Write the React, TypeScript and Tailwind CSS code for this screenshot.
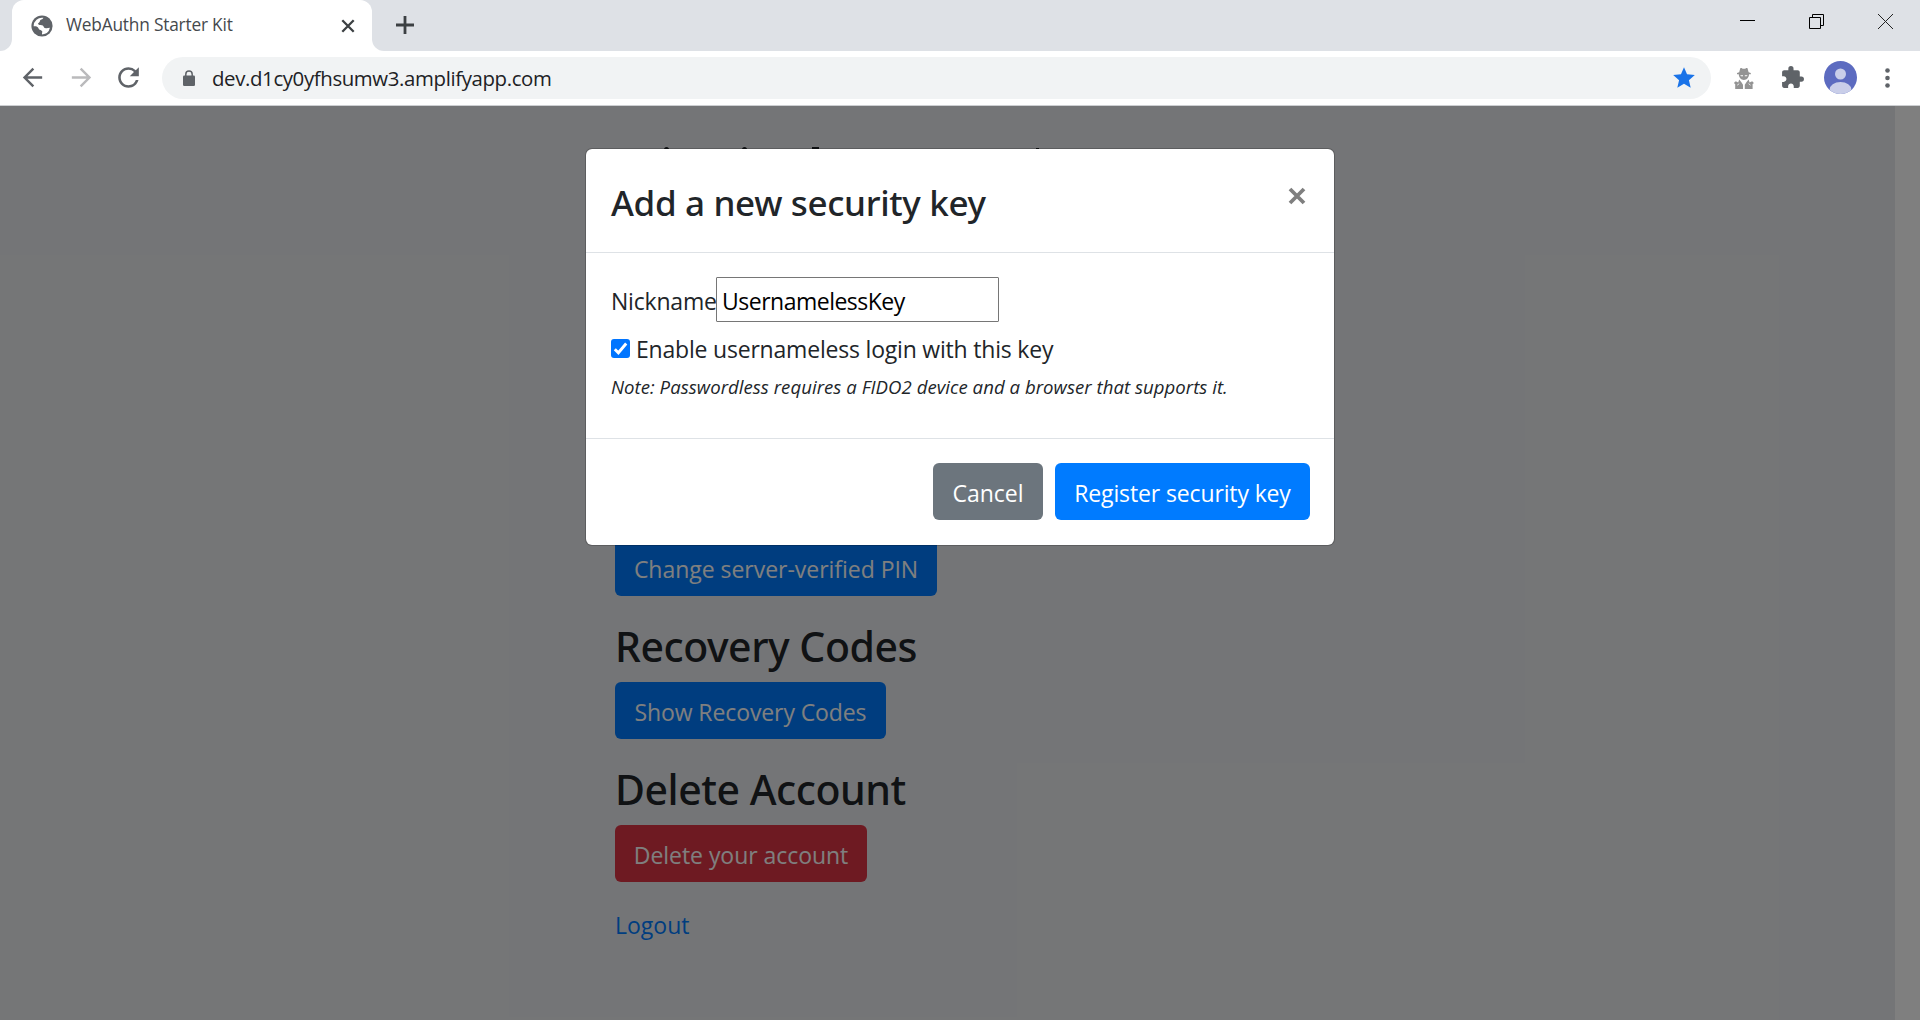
import { useState, type ReactNode } from "react";
import { MdArrowBack, MdArrowForward, MdRefresh, MdStar, MdExtension } from "react-icons/md";

function GlobeIcon() {
  return (
    <svg viewBox="0 0 22 22" className="size-[22px] shrink-0">
      <circle cx="11" cy="11" r="10.6" fill="#5f6368" />
      <path
        d="M12.4 2.800c-.3 1.400-1.900 1.600-2.900 2.300-1 .8-.2 1.700-1.400 2.400-.9.5-1.400 1.100-.6 1.900 1.100.8 3.100.3 4.300 1 1.100.8.9 2.200 2.200 2.700 1.500.5 3 .1 4.900-.3a8.400 8.400 0 0 1-7.800 6.600c-.4-1.200.3-1.800.2-2.800-.2-1.200-1.500-1.400-2.600-1.900-1.200-.6-1-2-2.200-2.800-1-.7-2.500-.7-3.900-.7A8.400 8.400 0 0 1 12.400 2.800z"
        fill="#fff"
      />
      <path
        d="M10 6.300c1.800-.2 3-.5 3.800-1.600l1.700-.9a8.600 8.600 0 0 1 3.600 5.600c-1.500.9-3.300.6-4.700-.1-1.200-.6-2.900-.2-3.900-1-.7-.6-.9-1.200-.5-2z"
        fill="#5f6368"
      />
    </svg>
  );
}

function LockIcon() {
  return (
    <svg viewBox="0 0 12 16" className="h-4 w-3">
      <path d="M2.800 7V4.200a3.200 3.200 0 0 1 6.400 0V7" fill="none" stroke="#5f6368" strokeWidth="1.500" />
      <rect y="5.500" width="12" height="10.500" rx="1.300" fill="#5f6368" />
    </svg>
  );
}

function SpyIcon() {
  return (
    <svg viewBox="0 0 20 21" className="h-[21px] w-5" fill="#939393">
      <path d="M6.200.6c.5-.8 1.300-.5 1.900-.2.900.5 2.600.5 3.600 0 .6-.3 1.500-.6 1.900.2L14.600 4.300l2.200.7v1.200H3V5l2.200-.7z" />
      <path d="M4.800 6h10.200c.2 3.200-2.300 6-5.100 6S4.600 9.200 4.800 6z" />
      <path d="M6.200 7.200h2.800v1H7zM10.800 7.200h2.800l-.8 1h-2z" fill="#fff" />
      <path d="M5.200 11.400l2.200 2.800 1.600 2.500V21H1.200v-5L0 15.200c.6-1.400 1.300-2 2.300-1.600l1.900 1zM14.600 11.400l-2.200 2.800-1.600 2.500V21h7.800v-5l1.200-.8c-.6-1.400-1.300-2-2.300-1.600l-1.900 1z" />
      <path d="M3.200 17.200l2-1.500M16.600 17.200l-2-1.500" stroke="#fff" strokeWidth=".8" />
    </svg>
  );
}

function Avatar() {
  return (
    <svg viewBox="0 0 33 33" className="size-[33px]">
      <clipPath id="avatar-clip">
        <circle cx="16.500" cy="16.500" r="16.500" />
      </clipPath>
      <g clipPath="url(#avatar-clip)">
        <rect width="33" height="33" fill="#5c6bc0" />
        <circle cx="16.500" cy="13" r="5.500" fill="#c9cee9" />
        <ellipse cx="16.500" cy="29" rx="11" ry="8" fill="#c9cee9" />
      </g>
    </svg>
  );
}

function TabStrip() {
  return (
    <div className="flex h-[51px] bg-white">
      <div className="w-3 rounded-br-[12px] bg-[#dee1e6]" />
      <div className="w-[360px] bg-[#dee1e6]">
        <div className="flex h-full items-center rounded-t-[12px] bg-white pl-[19px] pr-[17px]">
          <GlobeIcon />
          <span className="mb-[2px] ml-[13px] flex-1 whitespace-nowrap text-[17.3px] leading-6 tracking-[-0.19px] text-[#45494d]">
            WebAuthn Starter Kit
          </span>
          <svg viewBox="0 0 14 14" className="size-[14px]" stroke="#3c4043" strokeWidth="2.300">
            <path d="M1.300 1.300l11.400 11.400M12.700 1.300L1.300 12.700" />
          </svg>
        </div>
      </div>
      <div className="flex flex-1 justify-between rounded-bl-[12px] bg-[#dee1e6]">
        <svg viewBox="0 0 18 18" className="ml-6 mt-4 size-[18px]" stroke="#3c4043" strokeWidth="2.800">
          <path d="M9 0v18M0 9h18" />
        </svg>
        <div className="mr-[27px] mt-[14px] flex gap-[54px]">
          <svg viewBox="0 0 15 15" className="size-[15px]" stroke="#000">
            <path d="M0 6.500h15" />
          </svg>
          <svg viewBox="0 0 15 15" className="size-[15px]" fill="none" stroke="#000">
            <path d="M.5 3.500h11v11H.5zM3.500 3.500v-3h11v11h-3" />
          </svg>
          <svg viewBox="0 0 15 15" className="size-[15px]" stroke="#222">
            <path d="M0 0l15 15M15 0L0 15" />
          </svg>
        </div>
      </div>
    </div>
  );
}

function Toolbar() {
  return (
    <div className="flex h-[55px] items-center border-b border-[#cdcfd2] bg-white pl-[18px] pr-[30px] text-[#5f6368]">
      <MdArrowBack size={29} className="mb-[2px]" />
      <MdArrowForward size={29} className="mb-[2px] ml-[20px] text-[#bababc]" />
      <MdRefresh size={31} className="mb-px ml-[17px]" />
      <div className="ml-[18px] flex h-[42px] flex-1 items-center rounded-full bg-[#f1f3f4] pl-[21px] pr-[14px]">
        <LockIcon />
        <span className="ml-[17px] flex-1 text-[20.400px] leading-6 tracking-[-0.37px] text-[#202124]">
          dev.d1cy0yfhsumw3.amplifyapp.com
        </span>
        <MdStar size={26} className="text-[#1a73e8]" />
      </div>
      <div className="ml-[23px]"><SpyIcon /></div>
      <MdExtension size={25} className="mb-[2px] ml-[26px]" />
      <div className="mb-[2px] ml-[19px]"><Avatar /></div>
      <svg viewBox="0 0 5 20" className="mb-px ml-[28px] h-5 w-[5px]" fill="#5f6368">
        <circle cx="2.500" cy="2.500" r="2.300" />
        <circle cx="2.500" cy="10" r="2.300" />
        <circle cx="2.500" cy="17.500" r="2.300" />
      </svg>
    </div>
  );
}

function Button({ className, children }: { className: string; children: ReactNode }) {
  return (
    <button className={`block h-[57px] whitespace-nowrap rounded-[6px] pt-[4px] text-center text-[23px] text-white ${className}`}>
      {children}
    </button>
  );
}

function Heading({ children }: { children: ReactNode }) {
  return (
    <h3 className="mt-[23px] h-[63px] whitespace-nowrap font-['Noto_Sans'] text-[41px] font-medium leading-[54px] tracking-[-0.47px]">
      {children}
    </h3>
  );
}

function AccountPage() {
  return (
    <div className="flex h-full bg-[#e9ebee]">
      <main className="flex-1 pl-[615px] pt-[41px] text-[#212529]">
        <div className="flex h-[3px]">
          <i className="ml-[49px] h-full w-[5px] rounded-t-full bg-[#212529]" />
          <i className="ml-[73px] h-full w-[5px] rounded-t-full bg-[#212529]" />
          <i className="ml-[65px] h-full w-[7px] bg-[#212529]" />
          <i className="ml-[217px] mt-px h-full w-[3px] bg-[#212529]" />
        </div>
        <Button className="mt-[389px] w-[322px] bg-[#007bff] tracking-[-0.03px]">Change server-verified PIN</Button>
        <Heading>Recovery Codes</Heading>
        <Button className="w-[271px] bg-[#007bff] tracking-[-0.1px]">Show Recovery Codes</Button>
        <Heading>Delete Account</Heading>
        <Button className="w-[252px] bg-[#dc3545] tracking-[-0.05px]">Delete your account</Button>
        <a className="mt-[25px] block text-[23px] leading-9 text-[#007bff]">Logout</a>
      </main>
      <div className="w-[25px] bg-white" />
    </div>
  );
}

function SecurityKeyDialog() {
  const [nickname, setNickname] = useState("UsernamelessKey");
  return (
    <div className="h-[398px] w-[750px] overflow-hidden rounded-[7px] border border-black/20 bg-white bg-clip-padding text-[23px] text-[#212529]">
      <header className="flex h-[104px] items-start justify-between border-b border-[#dee2e6] pl-[25px] pr-[28px]">
        <h4 className="mt-[28px] whitespace-nowrap font-['Noto_Sans'] text-[35px] font-medium leading-[52px] tracking-[-0.34px]">
          Add a new security key
        </h4>
        <svg viewBox="0 0 18 18" className="mt-[38px] size-[18px]" stroke="#7f7f7f" strokeWidth="3.800">
          <path d="M2 2l14 14M16 2L2 16" />
        </svg>
      </header>
      <div className="h-[185px] pl-[25px] pt-6">
        <div className="flex h-[45px]">
          <label className="w-[105px] whitespace-nowrap pt-[6px] leading-9 tracking-[-0.2px]">Nickname</label>
          <input
            value={nickname}
            onChange={(e) => setNickname(e.target.value)}
            className="h-[45px] w-[283px] rounded-[1px] border border-[#767676] px-[5px] pt-[3px] tracking-[-0.5px] text-black outline-none"
          />
        </div>
        <label className="mt-[8px] flex h-[36px] items-center">
          <svg viewBox="0 0 19 19" className="mt-px size-[19px]">
            <rect width="19" height="19" rx="3" fill="#0075ff" />
            <path d="M3.800 10.200l3.600 3.600 7.800-9.300" fill="none" stroke="#fff" strokeWidth="2.900" />
          </svg>
          <span className="ml-[6px] mt-[2px] whitespace-nowrap tracking-[-0.2px]">Enable usernameless login with this key</span>
        </label>
        <p className="mt-[7px] whitespace-nowrap text-[18.600px] italic leading-7 tracking-[0.03px]">
          Note: Passwordless requires a FIDO2 device and a browser that supports it.
        </p>
      </div>
      <footer className="flex h-[107px] justify-end gap-3 border-t border-[#dee2e6] pr-[24px] pt-6">
        <Button className="w-[110px] bg-[#6c757d]">Cancel</Button>
        <Button className="w-[255px] bg-[#007bff] tracking-[-0.13px]">Register security key</Button>
      </footer>
    </div>
  );
}

export default function App() {
  return (
    <div className="flex h-[1020px] w-[1920px] flex-col overflow-hidden font-['Open_Sans','Noto_Sans',sans-serif]">
      <TabStrip />
      <Toolbar />
      <div className="relative min-h-0 flex-1">
        <AccountPage />
        <div className="absolute inset-0 flex justify-center bg-black/50 pt-[42px]">
          <SecurityKeyDialog />
        </div>
      </div>
    </div>
  );
}
